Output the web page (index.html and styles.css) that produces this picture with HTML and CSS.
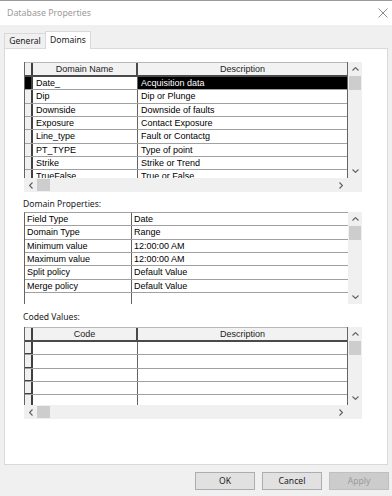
FILE: index.html
```html
<!DOCTYPE html>
<html>
<head>
<meta charset="utf-8">
<link rel="stylesheet" href="styles.css">
</head>
<body>
<div class="window">
  <div class="titlebar">
    <span class="title">Database Properties</span>
    <svg class="close" width="10" height="10" viewBox="0 0 10 10"><path d="M0.5 0.5L9.5 9.5M9.5 0.5L0.5 9.5" stroke="#8a8a8a" stroke-width="1" fill="none"/></svg>
  </div>
  <div class="tabs">
    <div class="tab general">General</div>
    <div class="tab active">Domains</div>
  </div>
  <div class="panel">
    <div class="grid g1">
      <div class="grid-top">
        <div class="body">
          <div class="row hdr"><div class="rh"></div><div class="c1">Domain Name</div><div class="c2">Description</div></div>
          <div class="row sel"><div class="rh"></div><div class="c1">Date_</div><div class="c2">Acquisition data</div></div>
          <div class="row"><div class="rh"></div><div class="c1">Dip</div><div class="c2">Dip or Plunge</div></div>
          <div class="row"><div class="rh"></div><div class="c1">Downside</div><div class="c2">Downside of faults</div></div>
          <div class="row"><div class="rh"></div><div class="c1">Exposure</div><div class="c2">Contact Exposure</div></div>
          <div class="row"><div class="rh"></div><div class="c1">Line_type</div><div class="c2">Fault or Contactg</div></div>
          <div class="row"><div class="rh"></div><div class="c1">PT_TYPE</div><div class="c2">Type of point</div></div>
          <div class="row"><div class="rh"></div><div class="c1">Strike</div><div class="c2">Strike or Trend</div></div>
          <div class="row"><div class="rh"></div><div class="c1">TrueFalse</div><div class="c2">True or False</div></div>
        </div>
        <div class="vscroll">
          <div class="varrow"><svg width="7" height="4" viewBox="0 0 7 4"><path d="M0.5 3.5L3.5 0.6L6.5 3.5" stroke="#606060" stroke-width="1.1" fill="none"/></svg></div>
          <div class="vthumb"></div>
          <div class="spacer"></div>
          <div class="varrow"><svg width="7" height="4" viewBox="0 0 7 4"><path d="M0.5 0.5L3.5 3.4L6.5 0.5" stroke="#606060" stroke-width="1.1" fill="none"/></svg></div>
        </div>
      </div>
      <div class="hscroll">
        <div class="harrow"><svg width="4" height="7" viewBox="0 0 4 7"><path d="M3.5 0.5L0.6 3.5L3.5 6.5" stroke="#606060" stroke-width="1.1" fill="none"/></svg></div>
        <div class="hthumb"></div>
        <div class="spacer"></div>
        <div class="harrow"><svg width="4" height="7" viewBox="0 0 4 7"><path d="M0.5 0.5L3.4 3.5L0.5 6.5" stroke="#606060" stroke-width="1.1" fill="none"/></svg></div>
      </div>
    </div>

    <div class="label l1">Domain Properties:</div>

    <div class="grid g2">
      <div class="grid-top">
        <div class="body">
          <div class="row"><div class="c1">Field Type</div><div class="c2">Date</div></div>
          <div class="row"><div class="c1">Domain Type</div><div class="c2">Range</div></div>
          <div class="row"><div class="c1">Minimum value</div><div class="c2">12:00:00 AM</div></div>
          <div class="row"><div class="c1">Maximum value</div><div class="c2">12:00:00 AM</div></div>
          <div class="row"><div class="c1">Split policy</div><div class="c2">Default Value</div></div>
          <div class="row"><div class="c1">Merge policy</div><div class="c2">Default Value</div></div>
          <div class="row last"><div class="c1"></div><div class="c2"></div></div>
        </div>
        <div class="vscroll">
          <div class="varrow"><svg width="7" height="4" viewBox="0 0 7 4"><path d="M0.5 3.5L3.5 0.6L6.5 3.5" stroke="#606060" stroke-width="1.1" fill="none"/></svg></div>
          <div class="vthumb"></div>
          <div class="spacer"></div>
          <div class="varrow"><svg width="7" height="4" viewBox="0 0 7 4"><path d="M0.5 0.5L3.5 3.4L6.5 0.5" stroke="#606060" stroke-width="1.1" fill="none"/></svg></div>
        </div>
      </div>
    </div>

    <div class="label l2">Coded Values:</div>

    <div class="grid g3">
      <div class="grid-top">
        <div class="body">
          <div class="row hdr"><div class="rh"></div><div class="c1">Code</div><div class="c2">Description</div></div>
          <div class="row"><div class="rh"></div><div class="c1"></div><div class="c2"></div></div>
          <div class="row"><div class="rh"></div><div class="c1"></div><div class="c2"></div></div>
          <div class="row"><div class="rh"></div><div class="c1"></div><div class="c2"></div></div>
          <div class="row"><div class="rh"></div><div class="c1"></div><div class="c2"></div></div>
          <div class="row"><div class="rh"></div><div class="c1"></div><div class="c2"></div></div>
        </div>
        <div class="vscroll">
          <div class="varrow"><svg width="7" height="4" viewBox="0 0 7 4"><path d="M0.5 3.5L3.5 0.6L6.5 3.5" stroke="#606060" stroke-width="1.1" fill="none"/></svg></div>
          <div class="vthumb"></div>
          <div class="spacer"></div>
          <div class="varrow"><svg width="7" height="4" viewBox="0 0 7 4"><path d="M0.5 0.5L3.5 3.4L6.5 0.5" stroke="#606060" stroke-width="1.1" fill="none"/></svg></div>
        </div>
      </div>
      <div class="hscroll">
        <div class="harrow"><svg width="4" height="7" viewBox="0 0 4 7"><path d="M3.5 0.5L0.6 3.5L3.5 6.5" stroke="#606060" stroke-width="1.1" fill="none"/></svg></div>
        <div class="hthumb"></div>
        <div class="spacer"></div>
        <div class="harrow"><svg width="4" height="7" viewBox="0 0 4 7"><path d="M0.5 0.5L3.4 3.5L0.5 6.5" stroke="#606060" stroke-width="1.1" fill="none"/></svg></div>
      </div>
    </div>
  </div>
  <div class="footer">
    <button class="btn">OK</button>
    <button class="btn">Cancel</button>
    <button class="btn disabled">Apply</button>
  </div>
</div>
</body>
</html>
```

FILE: styles.css
```css
html, body {
  margin: 0;
  padding: 0;
}
body {
  width: 392px;
  height: 496px;
  overflow: hidden;
  background: #f0f0f0;
  font-family: "Noto Sans", "Liberation Sans", sans-serif;
}
.window {
  height: 496px;
  box-sizing: border-box;
  border-top: 1px solid #9a9a9a;
  display: flex;
  flex-direction: column;
}
.titlebar {
  height: 24px;
  background: #ffffff;
  display: flex;
  align-items: center;
  justify-content: space-between;
  padding: 0 4px 0 7px;
  flex: none;
}
.title {
  font-size: 8.8px;
  color: #9a9a9a;
}
.close {
  display: block;
  margin-top: -1px;
}
.tabs {
  height: 23px;
  flex: none;
  display: flex;
  align-items: flex-end;
  padding-left: 4px;
}
.tab {
  box-sizing: border-box;
  height: 15px;
  border: 1px solid #d9d9d9;
  border-bottom: none;
  background: #f0f0f0;
  font-size: 8.6px;
  line-height: 14px;
  color: #1a1a1a;
  text-align: center;
}
.tab.general {
  width: 41px;
  border-right: none;
}
.tab.active {
  width: 46px;
  height: 18px;
  line-height: 17px;
  background: #ffffff;
  margin-bottom: -1px;
  position: relative;
  z-index: 1;
}
.panel {
  flex: none;
  height: 417px;
  box-sizing: border-box;
  margin: 0 4px;
  border: 1px solid #d9d9d9;
  background: #ffffff;
  padding: 13px 0 0 19px;
}
.grid {
  width: 338px;
  background: #f0f0f0;
  font-family: "Liberation Sans", Arial, sans-serif;
  font-size: 9px;
  color: #000;
}
.grid-top {
  display: flex;
}
.body {
  width: 324px;
  box-sizing: border-box;
  overflow: hidden;
  background: #ffffff;
  border-left: 1px solid #646464;
  border-right: 1px solid #646464;
}
.g1 .body { height: 116px; }
.g2 .body {
  height: 92px;
  border-right: none;
  border-top: 1px solid #a0a0a0;
}
.g3 .body { height: 78px; }
.row {
  display: flex;
  height: 13.33px;
  box-sizing: border-box;
  border-bottom: 1px solid #a0a0a0;
  line-height: 12px;
  white-space: nowrap;
}
.row.last { border-bottom: none; }
.rh {
  width: 8px;
  flex: none;
  box-sizing: border-box;
  background: #f0f0f0;
  border-right: 2px solid #404040;
}
.c1 {
  width: 105px;
  flex: none;
  box-sizing: border-box;
  border-right: 1px solid #646464;
  padding-left: 3px;
  overflow: hidden;
}
.c2 {
  flex: 1;
  padding-left: 3px;
  overflow: hidden;
}
.g2 .c1 {
  width: 107px;
  padding-left: 2px;
}
.g2 .c2 { padding-left: 2px; }
.hdr {
  height: 15px;
  background: #f2f2f2;
  border-top: 1px solid #b8b8b8;
  border-bottom: 2px solid #4a4a4a;
  line-height: 12px;
  color: #222;
}
.hdr .c1, .hdr .c2 {
  text-align: center;
  padding-left: 0;
  background: #f2f2f2;
}
.hdr .c1 { border-right: 2px solid #4a4a4a; }
.sel .rh { background: #000; }
.sel .c2 {
  background: #000;
  color: #fff;
}
.g3 .row:not(.hdr) .rh {
  border-bottom: 1px solid #404040;
}
.vscroll {
  width: 14px;
  flex: none;
  display: flex;
  flex-direction: column;
  background: #f0f0f0;
}
.varrow {
  height: 14px;
  flex: none;
  display: flex;
  align-items: center;
  justify-content: center;
}
.varrow svg, .harrow svg { display: block; }
.vthumb {
  height: 14px;
  flex: none;
  margin: 0 1px;
  background: #cdcdcd;
}
.spacer { flex: 1; }
.hscroll {
  width: 324px;
  height: 14px;
  display: flex;
  background: #f0f0f0;
}
.harrow {
  width: 13px;
  flex: none;
  display: flex;
  align-items: center;
  justify-content: center;
}
.hscroll .harrow:last-child { width: 14px; }
.hthumb {
  width: 13px;
  flex: none;
  margin: 1px 0;
  background: #cdcdcd;
}
.label {
  font-size: 8.6px;
  line-height: 16px;
  height: 16px;
  color: #1a1a1a;
  margin-left: -1px;
}
.l1 { padding-top: 4px; }
.l2 {
  padding-top: 5px;
  margin-bottom: 2px;
}
.footer {
  display: flex;
  justify-content: flex-end;
  gap: 7px;
  padding: 7px 3px 0 0;
}
.btn {
  width: 60px;
  height: 18px;
  box-sizing: border-box;
  margin: 0;
  padding: 0;
  background: #e1e1e1;
  border: 1px solid #adadad;
  border-radius: 0;
  font-family: "Noto Sans", "Liberation Sans", sans-serif;
  font-size: 8.6px;
  color: #1a1a1a;
  line-height: 16px;
}
.btn.disabled {
  background: #cccccc;
  border-color: #bfbfbf;
  color: #9a9a9a;
}
```
